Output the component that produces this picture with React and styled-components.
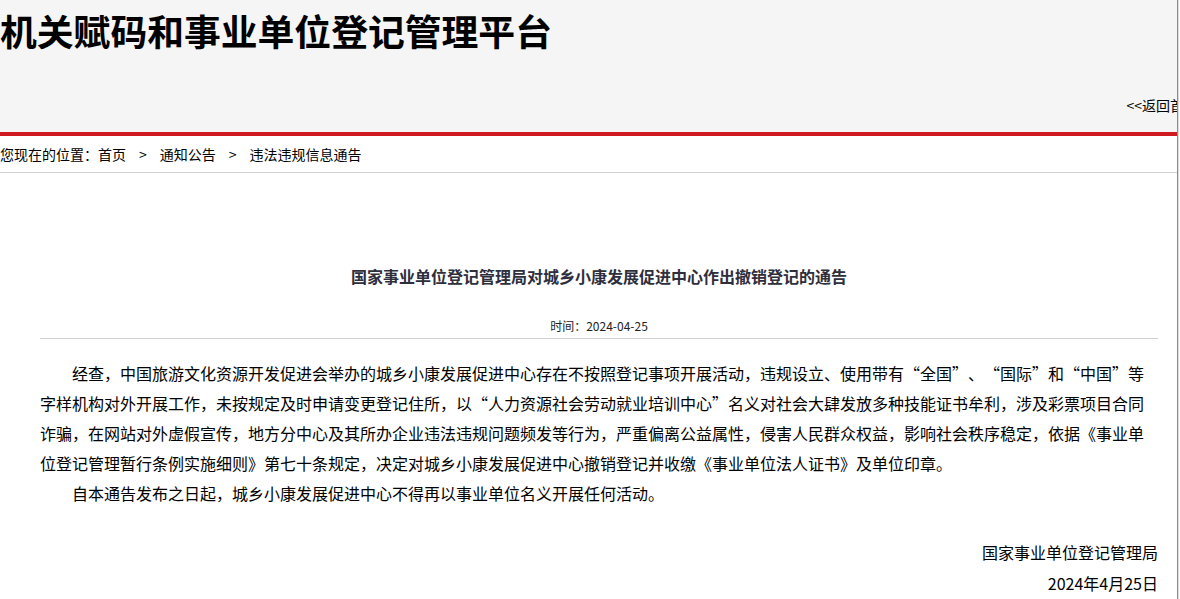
import styled, { createGlobalStyle } from "styled-components";

const GlobalStyle = createGlobalStyle`
  html, body {
    margin: 0;
    padding: 0;
    background: #fff;
  }
  body {
    font-family: "Noto Sans CJK SC", "Liberation Sans", sans-serif;
    color: #000;
    text-spacing-trim: space-all;
  }
`;

const notice = {
  title: "国家事业单位登记管理局对城乡小康发展促进中心作出撤销登记的通告",
  time: "2024-04-25",
  paragraphs: [
    "经查，中国旅游文化资源开发促进会举办的城乡小康发展促进中心存在不按照登记事项开展活动，违规设立、使用带有“全国”、“国际”和“中国”等字样机构对外开展工作，未按规定及时申请变更登记住所，以“人力资源社会劳动就业培训中心”名义对社会大肆发放多种技能证书牟利，涉及彩票项目合同诈骗，在网站对外虚假宣传，地方分中心及其所办企业违法违规问题频发等行为，严重偏离公益属性，侵害人民群众权益，影响社会秩序稳定，依据《事业单位登记管理暂行条例实施细则》第七十条规定，决定对城乡小康发展促进中心撤销登记并收缴《事业单位法人证书》及单位印章。",
    "自本通告发布之日起，城乡小康发展促进中心不得再以事业单位名义开展任何活动。",
  ],
  signer: "国家事业单位登记管理局",
  date: "2024年4月25日",
};

const crumbs = ["首页", "通知公告", "违法违规信息通告"];

const App = () => {
  return (
    <>
      <GlobalStyle />
      <Viewport>
        <Page>
          <Header>
            <SiteTitle>机关赋码和事业单位登记管理平台</SiteTitle>
            <BackLink>&lt;&lt;返回首页</BackLink>
          </Header>
          <Breadcrumb>
            <span>您现在的位置：</span>
            {crumbs.map((c, i) => (
              <span key={c}>
                {i > 0 && <Sep>&gt;</Sep>}
                {c}
              </span>
            ))}
          </Breadcrumb>
          <Article>
            <ArticleTitle>{notice.title}</ArticleTitle>
            <Meta>时间：{notice.time}</Meta>
            <Body>
              {notice.paragraphs.map((p, i) => (
                <Para key={i}>{p}</Para>
              ))}
            </Body>
            <Signature>
              <p>{notice.signer}</p>
              <p>{notice.date}</p>
            </Signature>
          </Article>
        </Page>
      </Viewport>
    </>
  );
};

const Viewport = styled.div`
  width: 1177px;
  height: 599px;
  overflow: hidden;
  border-right: 1px solid #8c8c8c;
  box-shadow: 1px 0 0 #dcdcdc;
`;

const Page = styled.div`
  width: 1198px;
`;

const Header = styled.header`
  height: 132px;
  background: #f5f5f5;
  border-bottom: 4px solid #cf1a21;
  display: flex;
  flex-direction: column;
`;

const SiteTitle = styled.h1`
  margin: 0;
  font-size: 36.8px;
  font-weight: bold;
  line-height: 60px;
  color: #000;
`;

const BackLink = styled.a`
  margin-top: 35px;
  align-self: flex-end;
  font-size: 14px;
  line-height: 20px;
  color: #000;
  cursor: pointer;
`;

const Breadcrumb = styled.div`
  height: 36px;
  line-height: 36px;
  font-size: 14px;
  color: #000;
  border-bottom: 1px solid #d0d0d0;
  width: 1177px;
`;

const Sep = styled.span`
  display: inline-block;
  margin: 0 13px;
`;

const Article = styled.div`
  padding: 0 40px;
`;

const ArticleTitle = styled.h2`
  margin: 88px 0 0;
  font-size: 16px;
  font-weight: bold;
  line-height: 30px;
  text-align: center;
  color: #2e2e3c;
`;

const Meta = styled.div`
  margin-top: 23px;
  font-size: 12px;
  line-height: 24px;
  text-align: center;
  color: #222;
  border-bottom: 1px solid #d0d0d0;
`;

const Body = styled.div`
  padding-top: 19px;
`;

const Para = styled.p`
  margin: 0;
  font-size: 16px;
  line-height: 30px;
  text-indent: 2em;
  color: #000;
`;

const Signature = styled.div`
  margin-top: 29px;
  text-align: right;
  font-size: 16px;
  line-height: 31px;

  p {
    margin: 0;
  }
`;

export default App;
